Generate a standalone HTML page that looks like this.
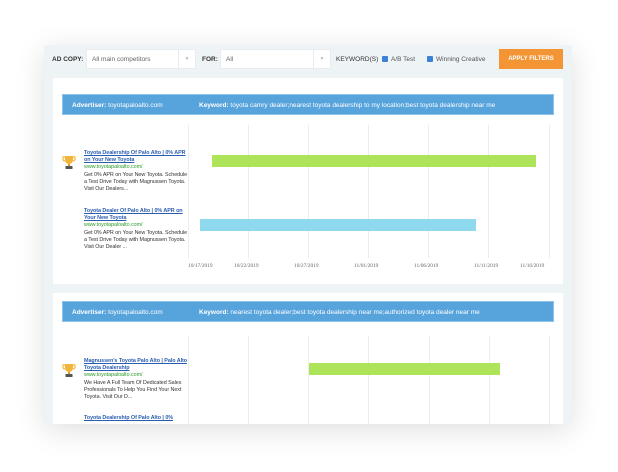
<!DOCTYPE html>
<html><head><style>
*{margin:0;padding:0;box-sizing:border-box}
body{width:618px;height:472px;background:#fff;font-family:"Liberation Sans",sans-serif;position:relative;overflow:hidden}
.panel{position:absolute;left:44px;top:45px;width:528px;height:379px;background:#eef3f6;box-shadow:0 6px 28px rgba(0,0,0,0.13);overflow:hidden}
.abs{position:absolute}
.lbl{font-size:6.5px;color:#333;font-weight:bold;top:56px}
.sel{background:#fff;height:20px;top:49px;font-size:6.5px;color:#666;padding:6px 5px;border:1px solid #e8ecef}
.sel .ar{position:absolute;right:0;top:0;width:17px;height:18px;border-left:1px solid #e8ecef;color:#bbb;font-size:5px;text-align:center;line-height:18px}
.cb{width:6px;height:6px;background:#3b82d6;border-radius:1px;top:56px}
.ck{font-size:6.5px;color:#555;top:56px}
.btn{left:499px;top:49px;width:64px;height:20px;background:#f39534;color:#fff;font-size:6px;font-weight:bold;text-align:center;line-height:20px}
.card{position:absolute;left:53px;width:510px;background:#fff}
.hdr{position:absolute;left:9px;width:492px;height:21px;background:#57a3dc;color:#fff;font-size:6.5px;line-height:21px;border:1px solid #8cc3ea}
.vl{position:absolute;width:1px;background:#ebeef1}
.bar{position:absolute;height:12px}
.t{font-size:5.4px;line-height:7.2px;color:#333;width:104px;letter-spacing:-0.05px}
.t a{color:#2a5db0;text-decoration:underline;font-weight:bold;display:block}
.t .u{color:#2e9b2e;display:block}
.date{font-size:5.4px;color:#666;top:263px;font-family:"Liberation Serif",serif}
.tr{width:14px;height:15px}
</style></head><body>
<div class="panel"></div>
<div class="abs lbl" style="left:52px">AD COPY:</div>
<div class="abs sel" style="left:86px;width:110px">All main competitors<div class="ar">▼</div></div>
<div class="abs lbl" style="left:202px">FOR:</div>
<div class="abs sel" style="left:220px;width:111px">All<div class="ar">▼</div></div>
<div class="abs lbl" style="left:336px;font-weight:normal;color:#333">KEYWORD(S)</div>
<div class="abs cb" style="left:382px"></div>
<div class="abs ck" style="left:391px">A/B Test</div>
<div class="abs cb" style="left:427px"></div>
<div class="abs ck" style="left:436px">Winning Creative</div>
<div class="abs btn">APPLY FILTERS</div>

<div class="card" style="top:78px;height:206px">
 <div class="hdr" style="top:16px"><span style="position:absolute;left:9px"><b>Advertiser:</b> toyotapaloalto.com</span><span style="position:absolute;left:136px"><b>Keyword:</b> toyota camry dealer;nearest toyota dealership to my location;best toyota dealership near me</span></div>
</div>
<div class="vl" style="left:188px;top:125px;height:133px"></div>
<div class="vl" style="left:248px;top:125px;height:133px"></div>
<div class="vl" style="left:308px;top:125px;height:133px"></div>
<div class="vl" style="left:368px;top:125px;height:133px"></div>
<div class="vl" style="left:428px;top:125px;height:133px"></div>
<div class="vl" style="left:488px;top:125px;height:133px"></div>
<div class="vl" style="left:549px;top:125px;height:133px"></div>
<div class="bar" style="left:212px;top:155px;width:324px;background:#aee45a"></div>
<div class="bar" style="left:200px;top:219px;width:276px;background:#8ed9ee"></div>
<div class="abs date" style="left:188px">10/17/2019</div>
<div class="abs date" style="left:234px">10/22/2019</div>
<div class="abs date" style="left:294px">10/27/2019</div>
<div class="abs date" style="left:354px">11/01/2019</div>
<div class="abs date" style="left:414px">11/06/2019</div>
<div class="abs date" style="left:474px">11/11/2019</div>
<div class="abs date" style="left:520px">11/16/2019</div>

<svg class="abs tr" style="left:62px;top:155px" viewBox="0 0 14 15"><path d="M3 1h8v4a4 4 0 0 1-8 0z" fill="#f2b53a"/><path d="M3 2H1v2a2 2 0 0 0 2 2M11 2h2v2a2 2 0 0 1-2 2" fill="none" stroke="#f2b53a" stroke-width="1.2"/><rect x="6" y="9" width="2" height="2" fill="#d89a2a"/><rect x="3.5" y="11" width="7" height="3" fill="#555"/></svg>
<div class="abs t" style="left:84px;top:150px"><a>Toyota Dealership Of Palo Alto | 0% APR on Your New Toyota</a><span class="u">www.toyotapaloalto.com/</span>Get 0% APR on Your New Toyota. Schedule a Test Drive Today with Magnussen Toyota. Visit Our Dealers...</div>
<div class="abs t" style="left:84px;top:208px"><a>Toyota Dealer Of Palo Alto | 0% APR on Your New Toyota</a><span class="u">www.toyotapaloalto.com/</span>Get 0% APR on Your New Toyota. Schedule a Test Drive Today with Magnussen Toyota. Visit Our Dealer ...</div>

<div class="card" style="top:293px;height:131px">
 <div class="hdr" style="top:8px"><span style="position:absolute;left:9px"><b>Advertiser:</b> toyotapaloalto.com</span><span style="position:absolute;left:136px"><b>Keyword:</b> nearest toyota dealer;best toyota dealership near me;authorized toyota dealer near me</span></div>
</div>
<div class="vl" style="left:188px;top:336px;height:88px"></div>
<div class="vl" style="left:248px;top:336px;height:88px"></div>
<div class="vl" style="left:308px;top:336px;height:88px"></div>
<div class="vl" style="left:368px;top:336px;height:88px"></div>
<div class="vl" style="left:429px;top:336px;height:88px"></div>
<div class="vl" style="left:489px;top:336px;height:88px"></div>
<div class="vl" style="left:549px;top:336px;height:88px"></div>
<div class="bar" style="left:309px;top:363px;width:191px;background:#aee45a"></div>
<svg class="abs tr" style="left:62px;top:363px" viewBox="0 0 14 15"><path d="M3 1h8v4a4 4 0 0 1-8 0z" fill="#f2b53a"/><path d="M3 2H1v2a2 2 0 0 0 2 2M11 2h2v2a2 2 0 0 1-2 2" fill="none" stroke="#f2b53a" stroke-width="1.2"/><rect x="6" y="9" width="2" height="2" fill="#d89a2a"/><rect x="3.5" y="11" width="7" height="3" fill="#555"/></svg>
<div class="abs t" style="left:84px;top:358px"><a>Magnussen's Toyota Palo Alto | Palo Alto Toyota Dealership</a><span class="u">www.toyotapaloalto.com/</span>We Have A Full Team Of Dedicated Sales Professionals To Help You Find Your Next Toyota. Visit Our D...</div>
<div class="abs t" style="left:84px;top:415px;height:9px;overflow:hidden"><a>Toyota Dealership Of Palo Alto | 0%</a></div>
</body></html>
